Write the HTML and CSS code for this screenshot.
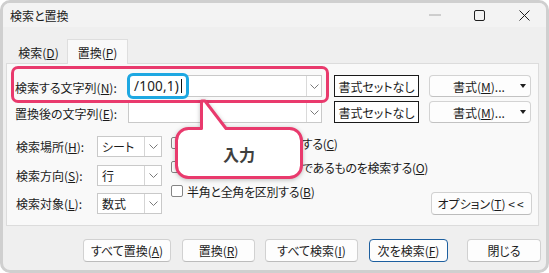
FILE: index.html
```html
<!doctype html>
<html lang="ja">
<head>
  <meta charset="utf-8" />
  <meta name="viewport" content="width=device-width,initial-scale=1" />
  <title>検索と置換</title>
  <link rel="stylesheet" href="styles.css">
</head>
<body>
  <div class="screen">
    <div class="window">
      <div class="titlebar">
        <span class="title">検索と置換</span>
        <div class="controls">
          <span class="ctl"><svg width="12" height="2" viewBox="0 0 12 2"><line x1="0" y1="1" x2="12" y2="1" stroke="#a8a8a8" stroke-width="1"/></svg></span>
          <span class="ctl"><svg width="11" height="11" viewBox="0 0 11 11"><rect x="0.5" y="0.5" width="10" height="10" rx="1.5" fill="none" stroke="#1f1f1f" stroke-width="1"/></svg></span>
          <span class="ctl"><svg width="11" height="11" viewBox="0 0 11 11"><path d="M0.5 0.5L10.5 10.5M10.5 0.5L0.5 10.5" stroke="#1f1f1f" stroke-width="1"/></svg></span>
        </div>
      </div>

      <div class="tabs">
        <div class="tab"><span>検索(<u>D</u>)</span></div>
        <div class="tab active"><span>置換(<u>P</u>)</span></div>
      </div>

      <div class="panel">
        <div class="find-row">
          <label class="row-label">検索する文字列(<u>N</u>):</label>
          <div class="combo">
            <span class="value">/100,1)</span><span class="caret"></span>
            <span class="drop"><svg width="9" height="5" viewBox="0 0 9 5"><polyline points="0.5,0.5 4.5,4.5 8.5,0.5" fill="none" stroke="#7a7a7a" stroke-width="1"/></svg></span>
          </div>
          <button class="fmt-none">書式セットなし</button>
          <button class="fmt"><span>書式(<u>M</u>)...</span><span class="tri"><svg width="6" height="4" viewBox="0 0 6 4"><path d="M0 0H6L3 4Z" fill="#1f1f1f"/></svg></span></button>
        </div>
        <div class="find-row second">
          <label class="row-label">置換後の文字列(<u>E</u>):</label>
          <div class="combo">
            <span class="value"></span>
            <span class="drop"><svg width="9" height="5" viewBox="0 0 9 5"><polyline points="0.5,0.5 4.5,4.5 8.5,0.5" fill="none" stroke="#7a7a7a" stroke-width="1"/></svg></span>
          </div>
          <button class="fmt-none">書式セットなし</button>
          <button class="fmt"><span>書式(<u>M</u>)...</span><span class="tri"><svg width="6" height="4" viewBox="0 0 6 4"><path d="M0 0H6L3 4Z" fill="#1f1f1f"/></svg></span></button>
        </div>

        <div class="lower">
          <div class="selects">
            <label>検索場所(<u>H</u>):</label>
            <div class="select"><span class="val">シート</span><span class="drop"><svg width="9" height="5" viewBox="0 0 9 5"><polyline points="0.5,0.5 4.5,4.5 8.5,0.5" fill="none" stroke="#7a7a7a" stroke-width="1"/></svg></span></div>
            <label>検索方向(<u>S</u>):</label>
            <div class="select"><span class="val">行</span><span class="drop"><svg width="9" height="5" viewBox="0 0 9 5"><polyline points="0.5,0.5 4.5,4.5 8.5,0.5" fill="none" stroke="#7a7a7a" stroke-width="1"/></svg></span></div>
            <label>検索対象(<u>L</u>):</label>
            <div class="select"><span class="val">数式</span><span class="drop"><svg width="9" height="5" viewBox="0 0 9 5"><polyline points="0.5,0.5 4.5,4.5 8.5,0.5" fill="none" stroke="#7a7a7a" stroke-width="1"/></svg></span></div>
          </div>

          <div class="checks">
            <div class="check"><span class="box"></span><span>大文字と小文字を区別する(<u>C</u>)</span></div>
            <div class="check"><span class="box"></span><span>セル内容が完全に同一であるものを検索する(<u>O</u>)</span></div>
            <div class="check"><span class="box"></span><span>半角と全角を区別する(<u>B</u>)</span></div>
          </div>

          <button class="btn opt">オプション(<u>T</u>) <span class="arrows">&lt;&lt;</span></button>
        </div>
      </div>

      <div class="actions">
        <button class="btn w-all">すべて置換(<u>A</u>)</button>
        <button class="btn w-rep">置換(<u>R</u>)</button>
        <button class="btn w-find">すべて検索(<u>I</u>)</button>
        <button class="btn primary w-next">次を検索(<u>F</u>)</button>
        <button class="btn w-close">閉じる</button>
      </div>
    </div>

    <!-- annotations over the dialog -->
    <div class="mark-pink"></div>
    <div class="mark-blue"></div>
    <svg class="callout" width="549" height="273" viewBox="0 0 549 273">
      <path d="M201.5 101L205 101L226 128.5H289.5A12 12 0 0 1 301.5 140.5V165.5A12 12 0 0 1 289.5 177.5H188.5A12 12 0 0 1 176.5 165.5V140.5A12 12 0 0 1 188.5 128.5H201.5Z" fill="#fff" stroke="#e93a6d" stroke-width="3" stroke-linejoin="round"/>
    </svg>
    <div class="callout-text">入力</div>
  </div>
</body>
</html>
```

FILE: styles.css
```css
*{box-sizing:border-box}
body{margin:0;font-family:"Noto Sans CJK JP","Noto Sans",sans-serif;font-size:12px;color:#1b1b1b;background:#fff;font-feature-settings:"palt"}
u{text-underline-offset:1px}
button{font-feature-settings:"palt"}
.screen{position:relative;width:549px;height:273px}
.window{width:549px;height:273px;border:3px solid #cfcfcf;border-radius:10px;background:#efefef;overflow:hidden;display:flex;flex-direction:column}

.titlebar{height:24px;display:flex;align-items:center;justify-content:space-between;padding-left:7px;background:#f3f3f3;flex:none}
.controls{display:flex;height:100%}
.ctl{width:45px;display:flex;align-items:center;justify-content:center}
.ctl:last-child{width:44px}

.tabs{display:flex;margin-top:12px;padding-left:7px;height:24px;flex:none}
.tab{display:flex;align-items:center;justify-content:center;width:57px;padding-top:2px}
.tab.active{width:61px;background:#f9f9f9;border:1px solid #dedede;border-bottom:0;position:relative;z-index:1;margin-bottom:-1px;height:25px;padding-top:0}

.panel{margin:0 7px 0 3px;height:163px;border:1px solid #dcdcdc;background:#f9f9f9;padding:11px 6px 0 8px;flex:none}

.find-row{display:flex;align-items:center;height:22px}
.find-row.second{margin-top:4px}
.row-label{width:113px;padding-top:2px;white-space:nowrap}
.combo{width:194px;height:22px;display:flex;align-items:center;background:#fff;border:1px solid #c9c9c9}
.combo .value{padding-left:5px;font-family:"Noto Sans",sans-serif;font-size:13.5px;letter-spacing:0.2px}
.combo .caret{width:1px;height:14px;background:#111;margin-left:2px}
.combo .drop{margin-left:auto;width:15px;height:100%;border-left:1px solid #dadada;display:flex;align-items:center;justify-content:center}
.fmt-none{margin-left:12px;width:85px;height:22px;border:1px solid #1a1a1a;background:#fff;font:inherit;color:inherit;padding:0;white-space:nowrap}
.fmt{margin-left:10px;width:102px;height:22px;border:1px solid #d3d3d3;border-bottom-color:#c2c2c2;border-radius:4px;background:#fdfdfd;font:inherit;color:inherit;display:flex;align-items:center;padding:0 4px 0 23px}
.fmt .tri{margin-left:auto;display:flex}

.lower{display:grid;grid-template-columns:146px minmax(0,1fr) 101px;column-gap:9px;margin-top:13px;margin-left:1px}
.selects{display:grid;grid-template-columns:81px 65px;grid-auto-rows:21px;row-gap:7.5px;align-items:center}
.select{height:21px;display:flex;background:#fff;border:1px solid #c9c9c9}
.select .val{flex:1;padding-left:4px;display:flex;align-items:center}
.select .drop{width:17px;border-left:1px solid #d5d5d5;display:flex;align-items:center;justify-content:center}
.checks{display:flex;flex-direction:column;gap:6px;margin-top:-2px}
.check{height:18px;display:flex;align-items:center;gap:4px;white-space:nowrap;letter-spacing:-0.3px}
.box{width:12px;height:12px;border:1px solid #858585;border-radius:2px;background:#fff;flex:none}

.btn{height:23px;border:1px solid #d1d1d1;border-bottom-color:#bcbcbc;border-radius:4px;background:#fdfdfd;font:inherit;color:inherit;padding:0;white-space:nowrap}
.opt{align-self:end;margin-bottom:-1px}
.opt .arrows{letter-spacing:2px}
.primary{border:1px solid #1d5f9f}

.actions{display:flex;margin-top:13px;padding-left:80px}
.w-all{width:88px}
.w-rep{width:73px;margin-left:11px}
.w-find{width:93px;margin-left:10px}
.w-next{width:79px;margin-left:11px}
.w-close{width:74px;margin-left:19px}

.mark-pink{position:absolute;left:11px;top:66px;width:318px;height:37px;border:3px solid #e93a6d;border-radius:7px}
.mark-blue{position:absolute;left:127px;top:73px;width:62px;height:26px;border:3px solid #1ea8e2;border-radius:6px}
.callout{position:absolute;left:0;top:0;filter:drop-shadow(0 1px 2px rgba(0,0,0,0.25))}
.callout-text{position:absolute;left:176px;top:128px;width:126px;height:50px;display:flex;align-items:center;justify-content:center;font-size:16px;font-weight:bold;color:#404040;padding-top:1px}
```
